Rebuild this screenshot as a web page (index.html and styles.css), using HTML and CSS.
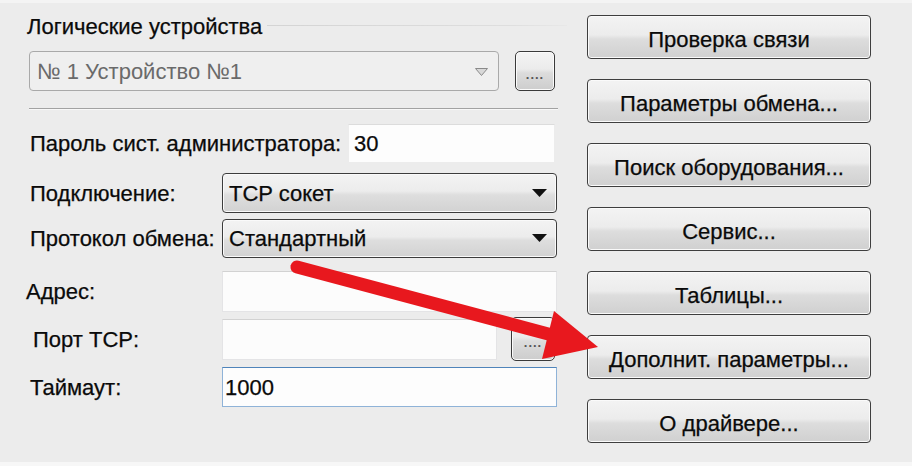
FILE: index.html
```html
<!DOCTYPE html>
<html lang="ru">
<head>
<meta charset="utf-8">
<title>Логические устройства</title>
<link rel="stylesheet" href="styles.css">
</head>
<body>
<div class="page">
  <div class="left">
    <div class="title-row"><span class="title">Логические устройства</span></div>
    <div class="dev-row">
      <div class="combo combo-disabled">
        <span class="combo-text">№ 1 Устройство №1</span>
        <svg class="tri-outline" width="13" height="8" viewBox="0 0 13 8"><polygon points="0.5,0.5 12.5,0.5 6.5,7.5" fill="#d8d8d8" stroke="#8a8a8a" stroke-width="1"/></svg>
      </div>
      <div class="dots-btn dev-dots"><span>....</span></div>
    </div>
    <div class="sep"></div>
    <div class="row pass-row">
      <span class="lbl lbl-pass">Пароль сист. администратора:</span>
      <div class="input input-pass">30</div>
    </div>
    <div class="row conn-row">
      <span class="lbl">Подключение:</span>
      <div class="combo combo-active">
        <span class="combo-text">TCP сокет</span>
        <svg class="tri" width="15" height="8" viewBox="0 0 15 8"><polygon points="0,0 15,0 7.5,8" fill="#111"/></svg>
      </div>
    </div>
    <div class="row proto-row">
      <span class="lbl">Протокол обмена:</span>
      <div class="combo combo-active">
        <span class="combo-text">Стандартный</span>
        <svg class="tri" width="15" height="8" viewBox="0 0 15 8"><polygon points="0,0 15,0 7.5,8" fill="#111"/></svg>
      </div>
    </div>
    <div class="row addr-row">
      <span class="lbl lbl-addr">Адрес:</span>
      <div class="input input-wide"></div>
    </div>
    <div class="row port-row">
      <span class="lbl lbl-port">Порт TCP:</span>
      <div class="input input-port"></div>
      <div class="dots-btn port-dots"><span>....</span></div>
    </div>
    <div class="row time-row">
      <span class="lbl">Таймаут:</span>
      <div class="input input-wide input-focus">1000</div>
    </div>
  </div>
  <div class="right">
    <div class="btn">Проверка связи</div>
    <div class="btn">Параметры обмена...</div>
    <div class="btn">Поиск оборудования...</div>
    <div class="btn">Сервис...</div>
    <div class="btn">Таблицы...</div>
    <div class="btn">Дополнит. параметры...</div>
    <div class="btn">О драйвере...</div>
  </div>
</div>
<svg class="red-arrow" width="912" height="466" viewBox="0 0 912 466">
  <line x1="297" y1="267" x2="552" y2="335" stroke="#e8181e" stroke-width="13" stroke-linecap="round"/>
  <polygon points="554,311 598,347 542,359" fill="#e8181e"/>
</svg>
</body>
</html>
```
FILE: styles.css
```css
* { box-sizing: border-box; }

html, body {
  margin: 0;
  padding: 0;
}

body {
  position: relative;
  width: 912px;
  height: 466px;
  overflow: hidden;
  background: #f6f6f6;
  font-family: "Liberation Sans", Arial, sans-serif;
  font-size: 22px;
  color: #0a0a0a;
  -webkit-text-stroke: 0.25px currentColor;
}

.page {
  display: flex;
  height: 466px;
  background: #ececec;
  border-top: 3px solid #f4f4f4;
  border-bottom: 4px solid #f7f7f7;
}

.left {
  width: 570px;
  display: flex;
  flex-direction: column;
}

.title-row {
  display: flex;
  align-items: center;
  height: 25px;
  margin-top: 11px;
  margin-left: 27px;
  margin-right: 3px;
  line-height: 25px;
}

.title-row::after {
  content: "";
  flex: 1;
  height: 1px;
  margin-left: 5px;
  margin-top: -3px;
  background: linear-gradient(to right, #d4d4d4, #dedede 80%, #e8e8e8);
}

.dev-row {
  display: flex;
  gap: 16px;
  margin-top: 12px;
  margin-left: 29px;
  height: 40px;
}

.combo {
  display: flex;
  align-items: center;
  height: 100%;
  border-radius: 4px;
  line-height: 25px;
}

.combo-text {
  flex: 1;
  white-space: nowrap;
}

.combo-disabled {
  width: 470px;
  padding: 0 10px 0 7px;
  border: 1px solid #a9a9a9;
  background: #efefef;
  color: #6a6a6a;
  -webkit-text-stroke: 0;
}

.tri-outline {
  display: block;
  margin-top: 2px;
}

.combo-active {
  width: 335px;
  padding: 0 9px 0 6px;
  border: 1px solid #3c3c3c;
  background: linear-gradient(#f3f3f3 0%, #ececec 45%, #dedede 55%, #d2d2d2 100%);
  box-shadow: inset 0 0 0 1px #fafafa;
}

.tri {
  display: block;
  margin-top: -1px;
}

.dots-btn {
  display: flex;
  align-items: flex-end;
  justify-content: center;
  border: 1px solid #3a3a3a;
  border-radius: 5px;
  background: linear-gradient(#f4f4f4 0%, #ebebeb 45%, #dcdcdc 55%, #cdcdcd 100%);
  box-shadow: inset 0 0 0 1px #fbfbfb;
  color: #555;
  font-size: 13px;
  font-weight: bold;
  letter-spacing: 1px;
  line-height: 13px;
  -webkit-text-stroke: 0;
}

.dev-dots {
  width: 40px;
  height: 40px;
  padding-bottom: 9px;
}

.port-dots {
  width: 44px;
  height: 44px;
  margin-left: 14px;
  padding-bottom: 11px;
}

.sep {
  margin-top: 17px;
  margin-left: 29px;
  width: 529px;
  height: 2px;
  border-top: 1px solid #a2a2a2;
  border-bottom: 1px solid #f8f8f8;
}

.row {
  display: flex;
  align-items: center;
  padding-left: 30px;
  line-height: 25px;
}

.lbl {
  width: 192px;
  white-space: nowrap;
  flex-shrink: 0;
}

.lbl-pass { width: 318px; }
.lbl-addr { margin-left: -4px; width: 196px; }
.lbl-port { margin-left: 3px; width: 189px; }

.pass-row { margin-top: 14px; height: 39px; }
.conn-row { margin-top: 10px; height: 40px; }
.proto-row { margin-top: 6px; height: 39px; }
.addr-row { margin-top: 13px; height: 41px; }
.port-row { margin-top: 5px; height: 44px; }
.time-row { margin-top: 6px; height: 40px; }

.input {
  height: 100%;
  display: flex;
  align-items: center;
  background: #fcfcfc;
  border: 1px solid #e4e4e6;
  border-top-color: #d2d2d2;
}

.input-pass {
  width: 207px;
  padding-left: 5px;
  border-color: #ececec;
  border-top-color: #dcdcdc;
  background: #fdfdfd;
}

.input-wide {
  width: 335px;
  padding-left: 2px;
}

.input-port {
  width: 275px;
  height: 41px;
}

.input-focus {
  border: 1px solid #8fb3d8;
  border-top-color: #4f84ba;
  background: #fdfdfd;
}

.right {
  display: flex;
  flex-direction: column;
  gap: 20px;
  padding-top: 12px;
  margin-left: 17px;
}

.btn {
  width: 284px;
  height: 44px;
  display: flex;
  align-items: center;
  justify-content: center;
  padding-top: 4px;
  border: 1px solid #3e3e3e;
  border-radius: 4px;
  background: linear-gradient(#f3f3f3 0%, #ececec 45%, #dddddd 55%, #d0d0d0 100%);
  box-shadow: inset 0 0 0 1px #fafafa;
  white-space: nowrap;
  line-height: 25px;
}

.red-arrow {
  position: absolute;
  left: 0;
  top: 0;
}
```
